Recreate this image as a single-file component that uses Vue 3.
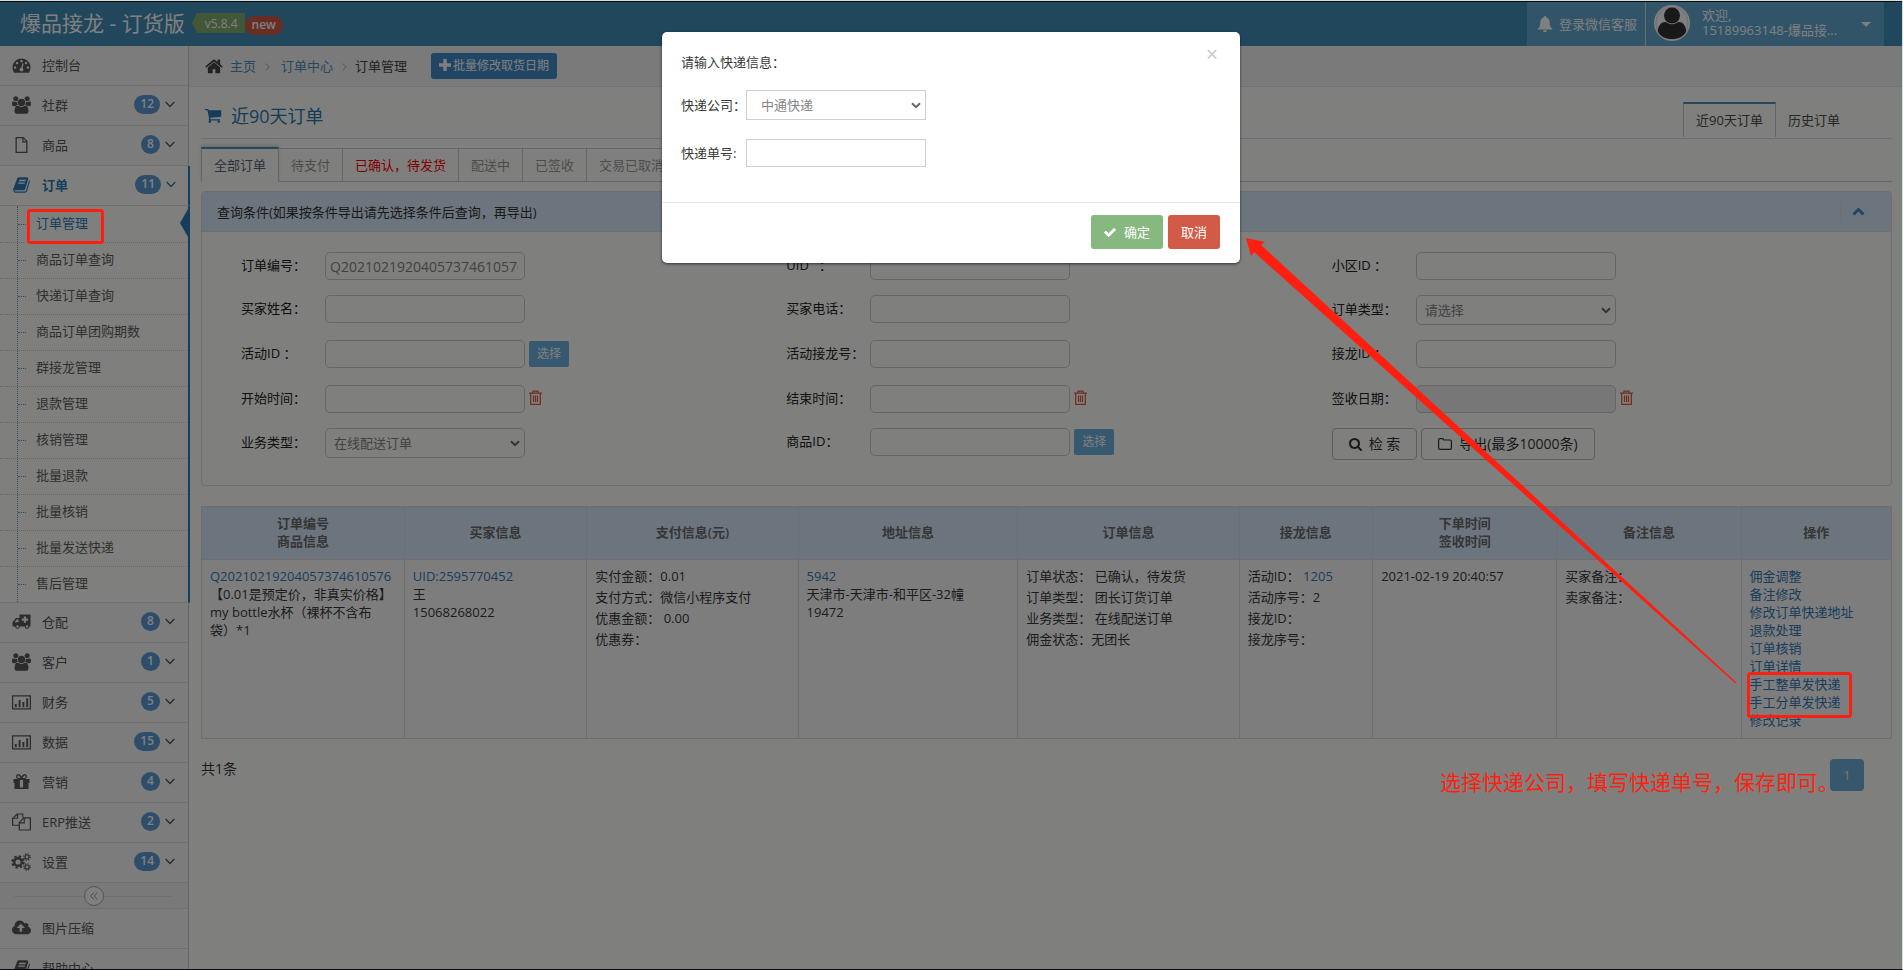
<script setup>
import { ref } from 'vue'

const icons = {
  dashboard: { box: '0 0 1792 1792', d: 'M384 1152q0-53-37.5-90.5t-90.5-37.5-90.5 37.5-37.5 90.5 37.5 90.5 90.5 37.5 90.5-37.5 37.5-90.5zm192-448q0-53-37.5-90.5t-90.5-37.5-90.5 37.5-37.5 90.5 37.5 90.5 90.5 37.5 90.5-37.5 37.5-90.5zm428 481l101-382q6-26-7.5-48.5t-38.5-29.5-48 6.5-30 39.5l-101 382q-60 5-107 43.5t-63 98.5q-20 77 20 146t117 89 146-20 89-117q16-60-6-117t-72-91zm660-33q0-53-37.5-90.5t-90.5-37.5-90.5 37.5-37.5 90.5 37.5 90.5 90.5 37.5 90.5-37.5 37.5-90.5zm-640-640q0-53-37.5-90.5t-90.5-37.5-90.5 37.5-37.5 90.5 37.5 90.5 90.5 37.5 90.5-37.5 37.5-90.5zm448 192q0-53-37.5-90.5t-90.5-37.5-90.5 37.5-37.5 90.5 37.5 90.5 90.5 37.5 90.5-37.5 37.5-90.5zm320 448q0 261-141 483-19 29-54 29h-1402q-35 0-54-29-141-221-141-483 0-182 71-348t191-286 286-191 348-71 348 71 286 191 191 286 71 348z' },
  users: { box: '-64 0 1920 1792', d: 'M529 896q-162 5-265 128h-134q-82 0-138-40.5t-56-118.5q0-353 124-353 6 0 43.5 21t97.5 42.5 119 21.5q67 0 133-23-5 37-5 66 0 139 81 256zm1071 637q0 120-73 189.5t-194 69.5h-874q-121 0-194-69.5t-73-189.5q0-53 3.5-103.5t14-109 26.5-108.5 43-97.5 62-81 85.5-53.5 111.5-20q10 0 43 21.5t73 48 107 48 135 21.5 135-21.5 107-48 73-48 43-21.5q61 0 111.5 20t85.5 53.5 62 81 43 97.5 26.5 108.5 14 109 3.5 103.5zm-1024-1277q0 106-75 181t-181 75-181-75-75-181 75-181 181-75 181 75 75 181zm704 384q0 159-112.5 271.5t-271.5 112.5-271.5-112.5-112.5-271.5 112.5-271.5 271.5-112.5 271.5 112.5 112.5 271.5zm576 225q0 78-56 118.5t-138 40.5h-134q-103-123-265-128 81-117 81-256 0-29-5-66 66 23 133 23 59 0 119-21.5t97.5-42.5 43.5-21q124 0 124 353zm-128-609q0 106-75 181t-181 75-181-75-75-181 75-181 181-75 181 75 75 181z' },
  file: { box: '0 0 18 18', d: 'M3 1h8l4 4v12H3zM4.3 2.3v13.4h9.4V6.500H9.800V2.300zM11 2.700v2.600h2.600z' },
  book: { box: '0 0 1792 1792', d: 'M1703 478q40 57 18 129l-275 906q-19 64-76.5 107.5t-122.500 43.500h-923q-77 0-148.500-53.500t-99.500-131.500q-24-67-2-127 0-4 3-27t4-37q1-8-3-21.500t-3-19.500q2-11 8-21t16.500-23.500 16.500-23.500q23-38 45-91.500t30-91.500q3-10 .5-30t-.5-28q3-11 17-28t17-23q21-36 42-92t25-90q1-9-2.500-32t.5-28q4-13 22-30.500t22-22.500q19-26 42.500-84.500t27.500-96.500q1-8-3-25.500t-2-26.500q2-8 9-18t18-23 17-21q8-12 16.500-30.500t15-35 16-36 19.500-32 26.500-23.500 36-11.500 47.500 5.500l-1 3q38-9 51-9h761q74 0 114 56t18 130l-274 906q-36 119-71.500 153.500t-128.500 34.500h-869q-27 0-38 15-11 16-1 43 24 70 144 70h923q29 0 56-15.500t35-41.500l300-987q7-22 5-57 38 15 59 43zm-1064 2q-4 13 2 22.500t20 9.500h608q13 0 25.500-9.500t16.500-22.500l21-64q4-13-2-22.500t-20-9.500h-608q-13 0-25.500 9.500t-16.500 22.500zm-83 256q-4 13 2 22.500t20 9.500h608q13 0 25.500-9.500t16.500-22.500l21-64q4-13-2-22.500t-20-9.500h-608q-13 0-25.500 9.500t-16.500 22.500z' },
  truck: { box: '0 0 18 18', d: 'M7 1.500h11v12h-1.200a2.300 2.300 0 0 1-4.600 0H7.300a2.300 2.300 0 0 1-4.600 0H0V9.200L3.500 5H7zM11.300 3.500v2h-2v2.300h2v2h2.300v-2h2V5.500h-2v-2zM4.200 6.500 2 9.200h4V6.500zM5 12.300a1.200 1.200 0 1 0 0 2.400 1.200 1.200 0 0 0 0-2.400zM14.500 12.300a1.200 1.200 0 1 0 0 2.400 1.200 1.200 0 0 0 0-2.400z' },
  chart: { box: '0 0 20 18', d: 'M0 2h20v15H0zM1.300 3.300v12.400h17.400V3.300zM3 11h2v3.500H3zM7 7h2v7.500H7zM11 9h2v5.500h-2zM15 5h2v9.500h-2z' },
  gift: { box: '0 0 18 18', d: 'M1 6h4.500a2.500 2.500 0 0 1-.8-4.600C6.500.4 8 1.800 9 3.600 10 1.800 11.500.4 13.300 1.400A2.500 2.500 0 0 1 12.500 6H17v4h-1v6H2v-6H1zM5.800 4.900h2.100C7 3 6.200 2.200 5.500 2.500c-1 .5-.9 2 .3 2.400zm4.300 0h2.100c1.200-.4 1.300-1.900.3-2.400-.7-.3-1.500.5-2.400 2.400zM7.400 7v7.500h3.200V7z' },
  copy: { box: '0 0 20 18', d: 'M5 0h7v4h-1.200V1.200H6.500v4.300H1.300v6.300H7V13H0V5zM5.300 1.800 2 4.500h3.300zM12 4h8v14H7V9.500zM13.500 5.200V10.500H8.300v6.300h10.400V5.200zM12.300 5.700 8.800 9.300h3.500z' },
  cloud: { box: '-64 128 1920 1536', d: 'M1216 864q0-14-9-23l-352-352q-9-9-23-9t-23 9l-351 351q-10 12-10 24 0 14 9 23t23 9h224v352q0 13 9.500 22.500t22.500 9.500h192q13 0 22.500-9.500t9.500-22.500v-352h224q13 0 22.500-9.500t9.500-22.500zm640 288q0 159-112.500 271.500t-271.500 112.500h-1088q-185 0-316.500-131.500t-131.500-316.500q0-130 70-240t188-165q-2-30-2-43 0-212 150-362t362-150q156 0 285.500 87t188.500 231q71-62 166-62 106 0 181 75t75 181q0 76-41 138 130 31 213.500 135.500t83.500 238.500z' },
}

const topMenu = [
  { icon: 'dashboard', label: '控制台' },
  { icon: 'users', label: '社群', count: 12 },
  { icon: 'file', label: '商品', count: 8 },
  { icon: 'book', label: '订单', count: 11, active: true },
]
const subMenu = ['订单管理', '商品订单查询', '快递订单查询', '商品订单团购期数', '群接龙管理', '退款管理', '核销管理', '批量退款', '批量核销', '批量发送快递', '售后管理']
const lowMenu = [
  { icon: 'truck', label: '仓配', count: 8 },
  { icon: 'users', label: '客户', count: 1 },
  { icon: 'chart', label: '财务', count: 5 },
  { icon: 'chart', label: '数据', count: 15 },
  { icon: 'gift', label: '营销', count: 4 },
  { icon: 'copy', label: 'ERP推送', count: 2 },
  { icon: 'cogs', label: '设置', count: 14 },
]
const footMenu = [
  { icon: 'cloud', label: '图片压缩' },
  { icon: 'book', label: '帮助中心' },
]
const menuGroups = [topMenu, lowMenu, footMenu]

const tabs = ['全部订单', '待支付', '已确认，待发货', '配送中', '已签收', '交易已取消']

const fields = [
  { id: 'order-no', label: '订单编号：', value: 'Q20210219204057374610576' },
  { id: 'uid', label: 'UID   ：' },
  { id: 'area', label: '小区ID ：' },
  { id: 'buyer', label: '买家姓名：' },
  { id: 'phone', label: '买家电话：' },
  { id: 'order-type', label: '订单类型：', options: ['请选择'] },
  { id: 'activity', label: '活动ID ：', pick: true },
  { id: 'activity-no', label: '活动接龙号：' },
  { id: 'chain', label: '接龙ID ：' },
  { id: 'start', label: '开始时间：', trash: true },
  { id: 'end', label: '结束时间：', trash: true },
  { id: 'sign', label: '签收日期：', trash: true, locked: true },
  { id: 'biz', label: '业务类型：', options: ['在线配送订单'] },
  { id: 'goods', label: '商品ID：', pick: true },
]

const heads = [['订单编号', '商品信息'], ['买家信息'], ['支付信息(元)'], ['地址信息'], ['订单信息'], ['接龙信息'], ['下单时间', '签收时间'], ['备注信息'], ['操作']]
const actions = ['佣金调整', '备注修改', '修改订单快递地址', '退款处理', '订单核销', '订单详情', '手工整单发快递', '手工分单发快递', '修改记录']

const company = ref('中通快递')
const trackingNo = ref('')
</script>

<template>
  <div class="screen">
    <header class="navbar">
      <a class="brand" href="#">爆品接龙 - 订货版</a>
      <span class="version">v5.8.4</span>
      <span class="fresh">new</span>
      <a class="service" href="#">
        <svg viewBox="0 0 16 16" width="16" height="16"><path d="M8 0c.8 0 1.200.6 1.100 1.300C11.500 1.900 12.700 4 12.700 6.500c0 3.500 1 5 2.600 6.200V13.500H.7v-.8C2.300 11.500 3.300 10 3.300 6.500c0-2.500 1.200-4.600 3.600-5.200C6.800.6 7.200 0 8 0zM6 14.200h4a2 2 0 0 1-4 0z" /></svg>
        登录微信客服
      </a>
      <button class="user" type="button">
        <svg class="avatar" viewBox="0 0 36 36" width="36" height="36">
          <circle cx="18" cy="18" r="18" fill="#fff" />
          <circle cx="18" cy="18" r="16" fill="none" stroke="#ddd" />
          <ellipse cx="18" cy="10.500" rx="8" ry="8" fill="#333" />
          <path d="M8.500 17.500c4-2 5 1.800 9.500 1.800s5.500-3.800 9.500-1.800c3 1.600 4.700 5.500 4.700 9C30 31.500 24.500 34 18 34S6 31.500 3.800 26.500c0-3.500 1.700-7.400 4.700-9z" fill="#333" />
        </svg>
        <span class="who">欢迎,<br>15189963148-爆品接...</span>
        <svg class="caret" viewBox="0 0 10 5" width="10" height="5"><path d="M0 0h10L5 5z" /></svg>
      </button>
    </header>

    <div class="body">
      <nav class="sidebar">
        <template v-for="(group, g) in menuGroups" :key="g">
          <a v-for="item in group" :key="item.label" href="#" class="item" :class="{ active: item.active }">
            <span class="glyph">
              <svg v-if="item.icon === 'cogs'" class="cogs" viewBox="0 0 20 18" width="20" height="18">
                <circle cx="7" cy="9" r="3.800" stroke-width="2.400" />
                <circle cx="7" cy="9" r="5.700" stroke-width="2" stroke-dasharray="2.400 2.077" />
                <circle cx="16" cy="4" r="2" stroke-width="1.200" />
                <circle cx="16" cy="4" r="3.200" stroke-width="1.200" stroke-dasharray="1.300 1.213" />
                <circle cx="16" cy="14" r="2" stroke-width="1.200" />
                <circle cx="16" cy="14" r="3.200" stroke-width="1.200" stroke-dasharray="1.300 1.213" />
              </svg>
              <svg v-else :viewBox="icons[item.icon].box" width="19" height="18"><path fill-rule="evenodd" :d="icons[item.icon].d" /></svg>
            </span>
            <span class="name">{{ item.label }}</span>
            <span v-if="item.count" class="count">{{ item.count }}</span>
            <svg v-if="item.count" class="down" viewBox="0 0 10 7" width="10" height="7"><path d="M.7 1 5 5.500 9.300 1" /></svg>
          </a>
          <ul v-if="g === 0" class="submenu">
            <li v-for="(name, i) in subMenu" :key="name" :class="{ current: i === 0 }"><a href="#">{{ name }}</a></li>
          </ul>
          <div v-if="g === 1" class="toggle">
            <button type="button" aria-label="收起">
              <svg viewBox="0 0 8 8" width="8" height="8"><path d="M3.800.5.700 4l3.100 3.500M7.300.5 4.200 4l3.100 3.500" /></svg>
            </button>
          </div>
        </template>
      </nav>

      <main class="main">
        <div class="crumbs">
          <svg class="home" viewBox="64 200 1664 1400" width="18" height="15"><path d="M1472 992v480q0 26-19 45t-45 19h-384v-384h-256v384h-384q-26 0-45-19t-19-45v-480q0-1 .5-3t.5-3l575-474 575 474q1 2 1 6zm223-69l-62 74q-8 9-21 11h-3q-13 0-21-7l-692-577-692 577q-12 8-24 7-13-2-21-11l-62-74q-8-10-7-23.500t11-21.500l719-599q32-26 76-26t76 26l244 204v-195q0-14 9-23t23-9h192q14 0 23 9t9 23v408l219 182q10 8 11 21.500t-7 23.500z" /></svg>
          <a href="#">主页</a>
          <svg class="sep wide" viewBox="0 0 5 8" width="5" height="8"><path d="m.7.500 3.500 3.500L.7 7.500" /></svg>
          <a href="#">订单中心</a>
          <svg class="sep" viewBox="0 0 5 8" width="5" height="8"><path d="m.7.500 3.500 3.500L.7 7.500" /></svg>
          <span class="here">订单管理</span>
          <button class="batch" type="button">
            <svg viewBox="0 0 12 12" width="12" height="12"><path d="M4.300 0h3.400v4.300H12v3.400H7.700V12H4.300V7.700H0V4.300h4.300z" /></svg>批量修改取货日期
          </button>
        </div>

        <div class="content">
          <div class="title-row">
            <h1>
              <svg viewBox="0 256 1792 1408" width="18" height="14"><path d="M704 1536q0 52-38 90t-90 38-90-38-38-90 38-90 90-38 90 38 38 90zm896 0q0 52-38 90t-90 38-90-38-38-90 38-90 90-38 90 38 38 90zm128-1088v512q0 24-16.500 42.500t-40.500 21.500l-1044 122q13 60 13 70 0 16-24 64h920q26 0 45 19t19 45-19 45-45 19h-1024q-26 0-45-19t-19-45q0-11 8-31.500t16-36 21.500-40 15.500-29.500l-177-823h-204q-26 0-45-19t-19-45 19-45 45-19h256q16 0 28.500 6.500t19.500 15.500 13 24.500 8 26 5.500 29.500 4.500 26h1201q26 0 45 19t19 45z" /></svg>
              近90天订单
            </h1>
            <div class="periods">
              <a href="#" class="on">近90天订单</a>
              <a href="#">历史订单</a>
            </div>
          </div>

          <div class="tabs">
            <a v-for="(tab, i) in tabs" :key="tab" href="#" :class="{ on: i === 0, hot: i === 2 }">{{ tab }}</a>
          </div>

          <section class="panel">
            <div class="panel-head">
              <span>查询条件(如果按条件导出请先选择条件后查询，再导出)</span>
              <button class="fold" type="button" aria-label="折叠">
                <svg viewBox="0 0 13 9" width="13" height="9"><path d="M1.500 7.500 6.500 2.500l5 5" /></svg>
              </button>
            </div>
            <form class="grid" @submit.prevent>
              <div v-for="f in fields" :key="f.id" class="field">
                <label :for="f.id">{{ f.label }}</label>
                <span v-if="f.options" class="pick">
                  <select :id="f.id"><option v-for="o in f.options" :key="o">{{ o }}</option></select>
                  <svg viewBox="0 0 10 7" width="10" height="7"><path d="m1 1.200 4 4 4-4" /></svg>
                </span>
                <input v-else :id="f.id" type="text" :value="f.value" :disabled="f.locked">
                <button v-if="f.pick" class="choose" type="button">选择</button>
                <button v-if="f.trash" class="trash" type="button" aria-label="清除">
                  <svg viewBox="0 0 13 15" width="13" height="15"><path d="M0 3.200h13M4 3V1.200h5V3M1.700 3.500v10.800h9.600V3.500M4.500 5.500v6.500M6.500 5.500v6.500M8.500 5.500v6.500" /></svg>
                </button>
              </div>
              <div class="field buttons">
                <button type="submit">
                  <svg viewBox="64 128 1664 1664" width="13" height="13"><path d="M1216 832q0-185-131.500-316.500t-316.500-131.500-316.500 131.500-131.500 316.500 131.500 316.500 316.500 131.500 316.500-131.500 131.500-316.500zm512 832q0 52-38 90t-90 38q-54 0-90-38l-343-342q-179 124-399 124-143 0-273.500-55.500t-225-150-150-225-55.500-273.500 55.500-273.500 150-225 225-150 273.500-55.500 273.500 55.500 225 150 150 225 55.500 273.500q0 220-124 399l343 343q37 37 37 90z" /></svg>
                  检 索
                </button>
                <button type="button">
                  <svg viewBox="0 0 14 12" width="14" height="12"><path d="M.6 10V2q0-1.400 1.400-1.400h2.500q1 0 1.200 1.400H12q1.400 0 1.400 1.400V10q0 1.400-1.400 1.400H2Q.6 11.400.6 10z" fill="none" stroke="currentColor" stroke-width="1.200" /></svg>
                  导出(最多10000条)
                </button>
              </div>
            </form>
          </section>

          <table class="orders">
            <colgroup><col v-for="(h, i) in heads" :key="i" :class="'c' + (i + 1)"></colgroup>
            <thead>
              <tr><th v-for="h in heads" :key="h[0]"><div v-for="t in h" :key="t">{{ t }}</div></th></tr>
            </thead>
            <tbody>
              <tr>
                <td><a href="#">Q20210219204057374610576</a><br>【0.01是预定价，非真实价格】my bottle水杯（裸杯不含布<br>袋）*1</td>
                <td><a href="#">UID:2595770452</a><br>王<br>15068268022</td>
                <td class="loose"><p>实付金额：0.01</p><p>支付方式：微信小程序支付</p><p>优惠金额： 0.00</p><p>优惠券：</p></td>
                <td><a href="#">5942</a><br>天津市-天津市-和平区-32幢<br>19472</td>
                <td class="loose"><p>订单状态： 已确认，待发货</p><p>订单类型： 团长订货订单</p><p>业务类型： 在线配送订单</p><p>佣金状态：无团长</p></td>
                <td class="loose"><p>活动ID： <a href="#">1205</a></p><p>活动序号：2</p><p>接龙ID：</p><p>接龙序号：</p></td>
                <td>2021-02-19 20:40:57</td>
                <td class="loose"><p>买家备注：</p><p>卖家备注：</p></td>
                <td><a v-for="a in actions" :key="a" href="#" class="action">{{ a }}</a></td>
              </tr>
            </tbody>
          </table>

          <div class="summary">
            <span>共1条</span>
            <button class="page" type="button">1</button>
          </div>
        </div>
      </main>
    </div>

    <div class="backdrop">
      <div class="modal" role="dialog" aria-label="请输入快递信息">
        <div class="modal-body">
          <button class="close" type="button" aria-label="关闭">×</button>
          <p>请输入快递信息：</p>
          <div class="line">
            <label for="company">快递公司：</label>
            <span class="pick">
              <select id="company" v-model="company"><option>中通快递</option></select>
              <svg viewBox="0 0 10 7" width="10" height="7"><path d="m1 1.200 4 4 4-4" /></svg>
            </span>
          </div>
          <div class="line">
            <label for="tracking">快递单号:</label>
            <input id="tracking" v-model="trackingNo" type="text">
          </div>
        </div>
        <div class="modal-foot">
          <button class="ok" type="button">
            <svg viewBox="121 334 1550 1188" width="12" height="9"><path d="M1671 566q0 40-28 68l-724 724-136 136q-28 28-68 28t-68-28l-136-136-362-362q-28-28-28-68t28-68l136-136q28-28 68-28t68 28l294 295 656-657q28-28 68-28t68 28l136 136q28 28 28 68z" /></svg>
            确定
          </button>
          <button class="cancel" type="button">取消</button>
        </div>
      </div>
    </div>

    <svg class="marks" viewBox="0 0 1903 970" width="1903" height="970">
      <path d="M1246 238 1265 242 1261 245 1736.500 682.500 1735.500 683.500 1254 252 1251 256z" fill="#ff1f10" />
      <rect x="28.500" y="210.500" width="74" height="32" rx="2" />
      <rect x="1748.500" y="673.500" width="102" height="43" rx="2" />
    </svg>
    <p class="note">选择快递公司，填写快递单号，保存即可。</p>
  </div>
</template>

<style>
body {
  margin: 0;
  background: #d9dedb;
}
</style>

<style scoped>
* {
  box-sizing: border-box;
}
.screen {
  position: relative;
  display: flex;
  flex-direction: column;
  height: 100vh;
  overflow: hidden;
  border-top: 1px solid #d5ddd9;
  border-right: 1px solid #d5ddd9;
  border-bottom: 1px solid #0c0c10;
  background: #fffffb;
  color: #393939;
  font: 13px/18px "Open Sans", "Noto Sans CJK SC", sans-serif;
}
a {
  color: #337ab7;
  text-decoration: none;
}
p {
  margin: 0;
}
button,
input,
select {
  margin: 0;
  font: inherit;
}
button {
  cursor: pointer;
}
svg {
  flex: none;
  fill: currentColor;
}

/* top bar */
.navbar {
  display: flex;
  flex: none;
  align-items: center;
  height: 45px;
  padding: 0 18px 2px 20px;
  border-top: 1px solid #081a26;
  background: #438eb9;
  color: #fff;
}
.brand {
  color: #fff;
  font-size: 21px;
  line-height: 28px;
  white-space: nowrap;
}
.version {
  position: relative;
  height: 20px;
  margin: 0 0 0 12px;
  padding: 0 7px 0 8px;
  background: #82af6f;
  font-size: 12px;
  line-height: 22px;
}
.version::before {
  content: "";
  position: absolute;
  top: 0;
  left: -5px;
  border: solid transparent;
  border-width: 10px 5px 10px 0;
  border-right-color: #82af6f;
}
.fresh {
  height: 19px;
  margin-top: 4px;
  padding: 0 7px;
  border-radius: 9px;
  background: #d15b47;
  font-size: 12px;
  font-weight: 600;
  line-height: 17px;
}
.service,
.user {
  display: flex;
  align-items: center;
  height: 44px;
  margin-bottom: -2px;
  border: 0;
  background: #62a8d1;
  color: #fff;
}
.service {
  gap: 6px;
  margin-left: auto;
  padding: 0 8px 0 10px;
  border-right: 1px solid #ddd;
}
.user {
  width: 238px;
  padding: 0 13px 0 8px;
  text-align: left;
}
.avatar {
  margin-top: -2px;
}
.who {
  margin: -2px auto 0 12px;
  line-height: 15px;
}

.body {
  display: flex;
  flex: 1;
  min-height: 0;
}

/* side menu */
.sidebar {
  flex: none;
  width: 189px;
  border-right: 1px solid #ccc;
  background: #f2f2f2;
}
.item {
  display: flex;
  align-items: center;
  height: 40px;
  padding: 0 13px 2px 10px;
  border-bottom: 1px solid #dfdfdf;
  background: #f9f9f9;
  color: #585858;
}
.glyph {
  display: flex;
  justify-content: center;
  width: 22px;
  margin-right: 10px;
}
.cogs {
  fill: none;
}
.cogs circle {
  fill: none;
  stroke: currentColor;
}
.name {
  margin-right: auto;
}
.count {
  min-width: 19px;
  height: 19px;
  padding: 0 6px;
  border-radius: 10px;
  background: #5a9bd5;
  color: #fff;
  font-size: 12px;
  font-weight: 600;
  line-height: 18px;
  text-align: center;
}
.down {
  margin-left: 5px;
}
.down path {
  fill: none;
  stroke: currentColor;
  stroke-width: 1.3px;
}
.active {
  width: 190px;
  padding-right: 12px;
  border-right: 2px solid #2b7dbc;
  background: #fffffb;
  color: #2b7dbc;
  font-weight: 600;
}
.submenu {
  position: relative;
  width: 190px;
  margin: 0;
  padding: 0;
  border-right: 2px solid #2b7dbc;
  border-bottom: 1px solid #dfdfdf;
  background: #fffffb;
  list-style: none;
}
.submenu::before {
  content: "";
  position: absolute;
  top: 0;
  bottom: 0;
  left: 17px;
  border-left: 1px dotted #6b9bc0;
}
.submenu li {
  position: relative;
  height: 36px;
  padding-left: 36px;
  border-top: 1px dotted #ccc;
  line-height: 33px;
}
.submenu li:first-child {
  border-top-color: transparent;
}
.submenu li::before {
  content: "";
  position: absolute;
  top: 17px;
  left: 18px;
  width: 8px;
  border-top: 1px dotted #6b9bc0;
}
.submenu a {
  color: #616161;
}
.submenu .current a {
  color: #2b7dbc;
}
.current::after {
  content: "";
  position: absolute;
  top: 2px;
  right: 0;
  border: solid transparent;
  border-width: 14px 8px 14px 0;
  border-right-color: #2b7dbc;
}
.toggle {
  position: relative;
  display: flex;
  justify-content: center;
  height: 26px;
  padding-top: 3px;
  border-bottom: 1px solid #dfdfdf;
  background: #f3f3f3;
}
.toggle::before {
  content: "";
  position: absolute;
  top: 13px;
  right: 15px;
  left: 14px;
  border-top: 1px solid #dfdfdf;
}
.toggle button {
  position: relative;
  display: flex;
  align-items: center;
  justify-content: center;
  width: 20px;
  height: 20px;
  padding: 0;
  border: 1px solid #aaa;
  border-radius: 50%;
  background: #fff;
  color: #999;
}
.toggle path {
  fill: none;
  stroke: currentColor;
}

/* main column */
.main {
  flex: 1;
  min-width: 0;
}
.crumbs {
  display: flex;
  align-items: center;
  height: 41px;
  padding-left: 16px;
  border-bottom: 1px solid #e5e5e5;
  background: #f5f5f5;
}
.crumbs > a {
  color: #4c8fbd;
}
.home {
  margin-right: 7px;
  color: #444;
}
.sep {
  margin: 2px 8px 0 9px;
  fill: none;
  stroke: #aaa;
}
.sep.wide {
  margin-right: 11px;
}
.here {
  color: #444;
}
.batch {
  display: flex;
  align-items: center;
  height: 26px;
  margin-left: 24px;
  padding: 0 8px;
  border: 0;
  border-radius: 3px;
  background: #428bca;
  color: #fff;
  font-size: 12px;
}
.batch svg {
  margin: 0 2px 3px 0;
}
.content {
  padding: 15px 10px 0 12px;
}
.title-row {
  display: flex;
  align-items: center;
  justify-content: space-between;
  height: 37px;
  border-bottom: 1px solid #dcdcee;
}
h1 {
  display: flex;
  gap: 9px;
  align-items: center;
  margin: 0 0 8px 3px;
  color: #2679b5;
  font-size: 18px;
  font-weight: 400;
  line-height: 24px;
}
.periods {
  display: flex;
  align-self: flex-start;
  margin-right: 40px;
}
.periods a {
  height: 35px;
  padding: 0 12px;
  border-top: 2px solid transparent;
  color: #4c4c4c;
  line-height: 32px;
}
.periods .on {
  border: solid #c8c8dc;
  border-width: 2px 1px 0;
  border-top-color: #4c8fbd;
}
.tabs {
  display: flex;
  align-items: flex-end;
  height: 35px;
  margin-top: 8px;
  border-bottom: 1px solid #c8c8dc;
}
.tabs a {
  height: 33px;
  padding: 0 12px;
  border-top: 1px solid #c8c8dc;
  border-right: 1px solid #c8c8dc;
  color: #999;
  line-height: 32px;
}
.tabs .on {
  height: 35px;
  margin-bottom: -1px;
  border-top: 2px solid #4c8fbd;
  border-left: 1px solid #c8c8dc;
  background: #fffffb;
  box-shadow: 0 -2px 3px rgba(0, 0, 0, 0.15);
  color: #576373;
}
.tabs .hot {
  color: #f00;
}

/* query panel */
.panel {
  margin-top: 9px;
  border: 1px solid #ddd;
  border-radius: 4px;
}
.panel-head {
  display: flex;
  align-items: center;
  justify-content: space-between;
  height: 40px;
  padding-left: 15px;
  border-bottom: 1px solid #ddd;
  background: #d9eafa;
  color: #333;
}
.fold {
  display: flex;
  align-items: center;
  height: 18px;
  margin-right: 26px;
  padding: 0 0 0 11px;
  border: 0;
  border-left: 1px solid #cfdfee;
  background: none;
  color: #428bca;
}
.fold path {
  fill: none;
  stroke: currentColor;
  stroke-width: 3px;
}
.grid {
  display: grid;
  grid-template-columns: repeat(3, 1fr);
  grid-template-rows: 28px 30px 30px 28px 32px;
  gap: 15px 0;
  padding: 20px 14px 25px 39px;
}
.field {
  display: flex;
  align-items: center;
  align-self: start;
  color: #222;
}
.field label {
  width: 84px;
  padding-bottom: 2px;
  white-space: pre;
}
.field input,
.line input {
  width: 200px;
  height: 28px;
  padding: 0 6px 0 4px;
  border: 1px solid #ccc;
  border-radius: 5px;
  background: transparent;
  color: #858585;
  font-size: 14px;
}
.field input:disabled {
  background: #eee;
}
.pick {
  position: relative;
  display: flex;
}
.pick select {
  appearance: none;
  width: 200px;
  height: 30px;
  padding: 0 24px 0 8px;
  border: 1px solid #ccc;
  border-radius: 5px;
  background: transparent;
  color: #858585;
}
.pick svg {
  position: absolute;
  top: 12px;
  right: 5px;
  fill: none;
  stroke: #666;
  stroke-width: 2px;
  pointer-events: none;
}
.choose {
  height: 26px;
  margin-left: 4px;
  padding: 0 8px;
  border: 0;
  border-radius: 2px;
  background: #6fb3e0;
  color: #fff;
  font-size: 12px;
}
.trash {
  display: flex;
  margin-left: 4px;
  padding: 0 0 3px;
  border: 0;
  background: none;
  color: #dd5a43;
}
.trash path {
  fill: none;
  stroke: currentColor;
  stroke-width: 1.2px;
}
.buttons {
  gap: 4px;
}
.buttons button {
  display: flex;
  gap: 7px;
  align-items: center;
  height: 32px;
  padding: 0 16px;
  border: 1px solid #bbb;
  border-radius: 4px;
  background: transparent;
  color: #333;
  font-size: 14px;
}

/* orders */
.orders {
  width: 100%;
  margin-top: 20px;
  border-collapse: collapse;
  table-layout: fixed;
}
.c1 { width: 12%; }
.c2 { width: 10.8%; }
.c3 { width: 12.5%; }
.c4 { width: 13%; }
.c5 { width: 13.1%; }
.c6 { width: 7.9%; }
.c7 { width: 10.9%; }
.c8 { width: 10.9%; }
.orders th,
.orders td {
  padding: 7px 8px 9px;
  border: 1px solid #ddd;
}
.orders th {
  height: 53px;
  background: #d9eafa;
  color: #6c6c6c;
  font-weight: 600;
}
.orders td {
  background: #fbfbfb;
  vertical-align: top;
  overflow-wrap: break-word;
}
.loose p {
  margin-bottom: 3px;
}
.action {
  display: block;
}
.summary {
  display: flex;
  align-items: flex-start;
  justify-content: space-between;
  margin-top: 20px;
  padding-right: 28px;
  font-size: 14px;
  line-height: 20px;
}
.page {
  width: 34px;
  height: 32px;
  border: 0;
  border-radius: 4px;
  background: #6faed9;
  color: #eee;
  font-size: 13px;
}

/* dialog */
.backdrop {
  position: absolute;
  inset: 0;
  display: flex;
  align-items: flex-start;
  justify-content: center;
  padding-top: 31px;
  background: rgba(0, 0, 0, 0.5);
}
.modal {
  width: 578px;
  border-radius: 5px;
  background: #fff;
  box-shadow: 0 1px 3px rgba(0, 0, 0, 0.6);
}
.modal-body {
  position: relative;
  padding: 21px 19px 35px;
}
.close {
  position: absolute;
  top: 12px;
  right: 22px;
  padding: 0;
  border: 0;
  background: none;
  color: #c8c8cc;
  font-size: 21px;
  line-height: 21px;
}
.line {
  display: flex;
  align-items: center;
  margin-top: 19px;
}
.line label {
  width: 65px;
}
.line input,
.line select {
  width: 180px;
  border-color: #d0d0d0;
  border-radius: 0;
}
.line select {
  padding-left: 14px;
}
.modal-foot {
  display: flex;
  gap: 5px;
  justify-content: flex-end;
  padding: 12px 20px 14px;
  border-top: 1px solid #e4e6ee;
}
.modal-foot button {
  display: flex;
  gap: 8px;
  align-items: center;
  height: 34px;
  padding: 0 13px;
  border: 0;
  border-radius: 3px;
  background: #87b87f;
  color: #fff;
}
.modal-foot .cancel {
  background: #d15b47;
}

/* annotations */
.marks {
  position: absolute;
  top: -1px;
  left: 0;
  pointer-events: none;
}
.marks rect {
  fill: none;
  stroke: #ff1f10;
  stroke-width: 3px;
}
.note {
  position: absolute;
  top: 766px;
  left: 1440px;
  color: #ff1f10;
  font-size: 21px;
  line-height: 30px;
  white-space: nowrap;
}
</style>
